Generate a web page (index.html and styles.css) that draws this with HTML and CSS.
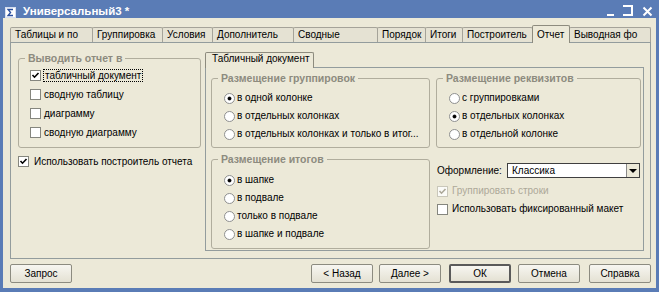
FILE: index.html
```html
<!DOCTYPE html>
<html>
<head>
<meta charset="utf-8">
<title>Универсальный3</title>
<link rel="stylesheet" href="styles.css">
</head>
<body>
<div class="window">
  <div class="titlebar">
    <svg class="appicon" width="11" height="11" viewBox="0 0 11 11"><rect x="0.5" y="0.5" width="10" height="10" fill="#fff" stroke="#d6def0"/><path d="M8 2.5 H3 L5.6 5.5 L3 8.5 H8" fill="none" stroke="#2b4f9e" stroke-width="1.3"/></svg>
    <span class="title">Универсальный3 *</span>
    <svg class="controls" width="50" height="14" viewBox="0 0 50 14"><rect x="4" y="10" width="7" height="2" fill="#fff"/><path d="M20 2 H29 V11 H20" fill="none" stroke="#fff" stroke-width="2"/><path d="M40.5 3.5 L48.5 11.5 M48.5 3.5 L40.5 11.5" stroke="#fff" stroke-width="2"/></svg>
  </div>
  <div class="client">
    <div class="tabs">
      <div class="tab t1">Таблицы и по</div>
      <div class="tab t2">Группировка</div>
      <div class="tab t3">Условия</div>
      <div class="tab t4">Дополнитель</div>
      <div class="tab t5">Сводные</div>
      <div class="tab t6">Порядок</div>
      <div class="tab t7">Итоги</div>
      <div class="tab t8">Построитель</div>
      <div class="tab t9 sel">Отчет</div>
      <div class="tab t10">Выводная фо</div>
    </div>
    <div class="panel">
      <div class="leftcol">
        <fieldset class="group">
          <legend>Выводить отчет в</legend>
          <div class="gbody g-out">
            <div class="row r19 gap3"><span class="cb"><svg width="9" height="9" viewBox="0 0 9 9"><path d="M1.5 4 L3.5 6.2 L7.5 2" fill="none" stroke="#000" stroke-width="1.6"/></svg></span><span class="lbl focus">табличный документ</span></div>
            <div class="row r19 gap3"><span class="cb"></span><span class="lbl">сводную таблицу</span></div>
            <div class="row r19 gap3"><span class="cb"></span><span class="lbl">диаграмму</span></div>
            <div class="row r19 gap3"><span class="cb"></span><span class="lbl">сводную диаграмму</span></div>
          </div>
        </fieldset>
        <div class="row r19 gap5 standalone"><span class="cb"><svg width="9" height="9" viewBox="0 0 9 9"><path d="M1.5 4 L3.5 6.2 L7.5 2" fill="none" stroke="#000" stroke-width="1.6"/></svg></span><span class="lbl">Использовать построитель отчета</span></div>
      </div>
      <div class="innercol">
        <div class="itabs"><div class="itab">Табличный документ</div></div>
        <div class="ipanel">
          <fieldset class="group">
            <legend>Размещение группировок</legend>
            <div class="gbody g-grp">
              <div class="row r18 gap2"><span class="rb on"></span><span class="lbl">в одной колонке</span></div>
              <div class="row r18 gap2"><span class="rb"></span><span class="lbl">в отдельных колонках</span></div>
              <div class="row r18 gap2"><span class="rb"></span><span class="lbl">в отдельных колонках и только в итог...</span></div>
            </div>
          </fieldset>
          <fieldset class="group">
            <legend>Размещение реквизитов</legend>
            <div class="gbody g-grp">
              <div class="row r18 gap2"><span class="rb"></span><span class="lbl">с группировками</span></div>
              <div class="row r18 gap2"><span class="rb on"></span><span class="lbl">в отдельных колонках</span></div>
              <div class="row r18 gap2"><span class="rb"></span><span class="lbl">в отдельной колонке</span></div>
            </div>
          </fieldset>
          <fieldset class="group">
            <legend>Размещение итогов</legend>
            <div class="gbody g-itog">
              <div class="row r18 gap2"><span class="rb on"></span><span class="lbl">в шапке</span></div>
              <div class="row r18 gap2"><span class="rb"></span><span class="lbl">в подвале</span></div>
              <div class="row r18 gap2"><span class="rb"></span><span class="lbl">только в подвале</span></div>
              <div class="row r18 gap2"><span class="rb"></span><span class="lbl">в шапке и подвале</span></div>
            </div>
          </fieldset>
          <div class="opts">
            <div class="comborow">
              <span class="clabel">Оформление:</span>
              <div class="combo"><span class="ctext">Классика</span><span class="cbtn"><span class="tri"></span></span></div>
            </div>
            <div class="row r18 gap4 first"><span class="cb dis"><svg width="9" height="9" viewBox="0 0 9 9"><path d="M1.5 4 L3.5 6.2 L7.5 2" fill="none" stroke="#aca899" stroke-width="1.6"/></svg></span><span class="lbl dtext">Группировать строки</span></div>
            <div class="row r18 gap4"><span class="cb"></span><span class="lbl">Использовать фиксированный макет</span></div>
          </div>
        </div>
      </div>
    </div>
    <div class="buttons">
      <div class="btn">Запрос</div>
      <div class="btn b-back">&lt; Назад</div>
      <div class="btn b-next">Далее &gt;</div>
      <div class="btn b-ok">ОК</div>
      <div class="btn b-cancel">Отмена</div>
      <div class="btn b-help">Справка</div>
    </div>
  </div>
</div>
</body>
</html>
```
FILE: styles.css
```css
* { box-sizing: border-box; }
html, body { margin: 0; padding: 0; }
body {
  width: 659px; height: 292px; overflow: hidden;
  background: #5a7cb6;
  font-family: "Liberation Sans", Arial, sans-serif;
  font-size: 10px; color: #000;
}
.window {
  width: 659px; height: 292px;
  display: flex; flex-direction: column;
  background: #5a7cb6;
  padding: 0 3px 4px 3px;
}
.titlebar {
  height: 18px; flex: none;
  margin: 0 -3px;
  padding: 5px 6px 0 5px;
  display: flex; align-items: center;
  color: #fff;
}
.appicon { display: block; flex: none; margin-top: 1px; }
.title { margin-left: 7px; font-weight: bold; font-size: 11.5px; line-height: 13px; white-space: nowrap; }
.controls { display: block; margin-left: auto; align-self: flex-start; margin-top: -1px; }

.client {
  flex: 1;
  background: #ece9d8;
  padding: 7px 5px 5px 7px;
  display: flex; flex-direction: column;
}
.tabs { height: 17px; flex: none; display: flex; align-items: flex-end; }
.tab {
  flex: none; height: 15px;
  border: 1px solid #a5a399; border-bottom: none;
  border-radius: 2px 2px 0 0;
  margin-right: -1px;
  background: #e5e2d3;
  padding: 1px 0 0 4px;
  line-height: 12px; white-space: nowrap; overflow: hidden;
}
.tab.sel {
  height: 18px; margin-bottom: -1px; z-index: 1;
  background: #ece9d8; border-color: #8d8b7e;
  padding-top: 3px;
}
.t1 { width: 83px; } .t2 { width: 71px; } .t3 { width: 51px; } .t4 { width: 82px; }
.t5 { width: 85px; } .t6 { width: 49px; } .t7 { width: 38px; } .t8 { width: 71px; }
.t9 { width: 38px; } .t10 { width: 82px; }

.panel {
  height: 217px; flex: none;
  border: 1px solid #939c9d;
  background: #ece9d8;
  padding: 9px 6px 0 7px;
  display: flex; gap: 4px; align-items: flex-start;
}
.leftcol { width: 183px; flex: none; display: flex; flex-direction: column; }
.group {
  margin: 0; padding: 0; min-width: 0;
  border: 1px solid #b0ad9d; border-radius: 3px;
}
.group legend {
  margin-left: 6px; padding: 0 3px;
  font-weight: bold; font-size: 10.5px; line-height: 12px;
  color: #8d8b7f; white-space: nowrap;
}
.gbody { display: flex; flex-direction: column; }
.g-out { padding: 2px 0 5px 11px; }
.g-grp { padding: 5px 0 4px 12px; }
.g-itog { padding: 6px 0 5px 12px; }
.row { display: flex; align-items: center; white-space: nowrap; }
.r19 { height: 19px; }
.r18 { height: 18px; }
.gap2 { gap: 2px; } .gap3 { gap: 3px; } .gap4 { gap: 4px; } .gap5 { gap: 5px; }
.standalone { margin-top: 4px; }
.lbl { line-height: 12px; }
.focus { outline: 1px dotted #000; padding: 0 1px; line-height: 11px; }
.dtext { color: #aca899; }

.cb {
  flex: none; width: 11px; height: 11px;
  border: 1px solid #85867e; background: #fff;
  display: flex; align-items: center; justify-content: center;
}
.cb svg { display: block; }
.cb.dis { border-color: #c9c7ba; background: #fbfbf8; }
.rb {
  flex: none; width: 11px; height: 11px; border-radius: 50%;
  border: 1px solid #8f9090; background: #fff;
  display: flex; align-items: center; justify-content: center;
}
.rb.on::after { content: ""; width: 3px; height: 3px; border-radius: 50%; background: #000; box-shadow: 0 0 0 0.5px #333; }

.innercol { width: 439px; flex: none; display: flex; flex-direction: column; }
.itabs { display: flex; flex: none; }
.itab {
  width: 109px; height: 16px; margin-bottom: -1px; z-index: 1;
  border: 1px solid #8d8b7e; border-bottom: none; border-radius: 2px 2px 0 0;
  background: #ece9d8;
  padding: 0 0 0 6px; line-height: 12px;
  white-space: nowrap; overflow: hidden;
}
.ipanel {
  height: 184px;
  border: 1px solid #939c9d;
  padding: 4px 2px 0 5px;
  display: grid;
  grid-template-columns: 219px 205px;
  column-gap: 6px; row-gap: 5px;
  align-content: start; align-items: start;
}
.opts { padding: 10px 0 0 1px; display: flex; flex-direction: column; }
.comborow { height: 15px; display: flex; align-items: center; }
.clabel { width: 70px; flex: none; }
.combo {
  width: 133px; height: 15px;
  border: 1px solid #3f3f3f; background: #fff;
  display: flex;
}
.ctext { flex: 1; padding-left: 4px; line-height: 13px; }
.cbtn {
  width: 13px; flex: none;
  border-left: 1px solid #8a8a8a; background: #ece9d8;
  display: flex; align-items: center; justify-content: center;
}
.tri { width: 0; height: 0; border-left: 4px solid transparent; border-right: 4px solid transparent; border-top: 4px solid #000; }
.opts .first { margin-top: 4px; }

.buttons { height: 19px; flex: none; margin-top: 5px; display: flex; }
.btn {
  width: 62px; height: 19px; flex: none;
  border: 1px solid #8c8b80; border-radius: 2px;
  background: linear-gradient(#f7f6f1, #e4e1d3);
  display: flex; align-items: center; justify-content: center;
  white-space: nowrap;
}
.b-back { margin-left: auto; }
.b-next { margin-left: 6px; }
.b-ok { margin-left: 8px; border: 2px solid #5a5a5a; }
.b-cancel { margin-left: 7px; }
.b-help { margin-left: 9px; }
```
